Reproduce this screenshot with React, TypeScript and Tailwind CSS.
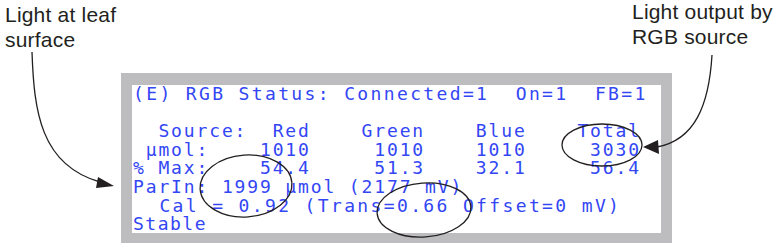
import React from "react";

const LINES: { text: string; track: string }[] = [
  { text: "(E) RGB Status: Connected=1  On=1  FB=1", track: "tracking-[2.36px]" },
  { text: " ", track: "tracking-[1.86px]" },
  { text: "  Source:  Red    Green    Blue    Total", track: "tracking-[1.86px]" },
  { text: " µmol:    1010     1010    1010     3030", track: "tracking-[1.86px]" },
  { text: "% Max:    54.4     51.3    32.1     56.4", track: "tracking-[1.86px]" },
  { text: "ParIn: 1999 µmol (2177 mV)", track: "tracking-[1.86px]" },
  { text: "  Cal = 0.92 (Trans=0.66 Offset=0 mV)", track: "tracking-[2.36px]" },
  { text: "Stable", track: "tracking-[1.5px]" },
];

export default function App() {
  return (
    <div className="relative w-[780px] h-[246px] bg-white overflow-hidden font-['Liberation_Sans',Arial,sans-serif] text-[#231f20]">
      {/* callout labels */}
      <div className="flex items-start h-[53px]">
        <div className="ml-[5px] mt-[2px] text-[21px] leading-[25px] tracking-[0.2px]">
          Light at leaf
          <br />
          surface
        </div>
        <div className="ml-auto mr-[148px] -mt-[1px] text-[21px] leading-[25px] tracking-[0.2px] w-0 whitespace-nowrap">
          Light output by
          <br />
          RGB source
        </div>
      </div>

      {/* instrument screen */}
      <div className="mt-[20px] ml-[121px] w-[551px] border-l-[11px] border-r-[11px] border-t-[12px] border-b-[10px] border-[#bdbdbf] bg-white">
        <div className="h-[148px] pl-px font-['DejaVu_Sans_Mono',monospace] text-[18px] leading-[18.6px] text-[#3346f4]">
          {LINES.map((l, i) => (
            <div key={i} className={`whitespace-pre ${l.track}`}>
              {l.text}
            </div>
          ))}
        </div>
      </div>

      {/* arrows and ellipses */}
      <svg className="absolute inset-0 pointer-events-none" width="780" height="246" viewBox="0 0 780 246">
        <g fill="none" stroke="#231f20" strokeWidth="1.3">
          <path d="M32 52 C 34 110, 40 165, 100 182" />
          <path d="M712 55 C 709 105, 695 140, 657 147" />
          <ellipse cx="602" cy="145" rx="40" ry="21" />
          <ellipse cx="246" cy="186" rx="46" ry="31" transform="rotate(-4 246 186)" />
          <ellipse cx="424" cy="210" rx="47" ry="27" transform="rotate(-4 424 210)" />
        </g>
        <g fill="#231f20">
          <polygon points="114,186 98,177 96,188" />
          <polygon points="643,147 658,140 659,154" />
        </g>
      </svg>
    </div>
  );
}
